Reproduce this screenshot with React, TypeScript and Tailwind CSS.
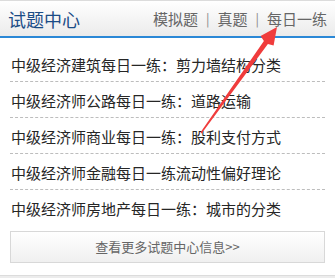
const items = [
  '中级经济建筑每日一练：剪力墙结构分类',
  '中级经济师公路每日一练：道路运输',
  '中级经济师商业每日一练：股利支付方式',
  '中级经济师金融每日一练流动性偏好理论',
  '中级经济师房地产每日一练：城市的分类',
];

const font = { fontFamily: '"Noto Sans CJK SC", "Noto Sans", sans-serif' };

export default function App() {
  return (
    <div className="relative w-[335px] h-[278px] overflow-hidden bg-white" style={font}>
      {/* header */}
      <div className="flex h-[36px] items-center justify-between border-t border-[#dcdcdc] bg-gradient-to-b from-white to-[#ebebeb] pl-[8px] pr-[8px]">
        <span className="text-[18px] leading-[22px] text-[#1b4c86]">试题中心</span>
        <div className="flex items-center text-[15px] leading-[20px] text-[#666]">
          <span>模拟题</span>
          <span className="mx-[8px] text-[13px] text-[#888]">|</span>
          <span>真题</span>
          <span className="mx-[8px] text-[13px] text-[#888]">|</span>
          <span>每日一练</span>
        </div>
      </div>
      <div className="h-[2px] bg-[#2b88d6]" />

      {/* list */}
      <ul className="mt-[8px] px-[10px]">
        {items.map((text, i) => (
          <li
            key={text}
            className={
              i < items.length - 1
                ? 'h-[36px] border-b border-dashed border-[#bdbdbd] pl-[1px] pt-[9px] text-[15px] leading-[20px] text-[#262626]'
                : 'h-[35px] pl-[1px] pt-[9px] text-[15px] leading-[20px] text-[#262626]'
            }
          >
            {text}
          </li>
        ))}
      </ul>

      <div className="mx-[10px] mt-[6px] flex h-[32px] items-center justify-center border border-[#d8d8d8] bg-gradient-to-b from-white to-[#f0f0f0] text-[13px] text-[#666]">
        查看更多试题中心信息&gt;&gt;
      </div>

      <div className="mt-[12px] h-[3px] border-t border-[#dcdcdc] bg-[#ececec]" />

      {/* red annotation arrow */}
      <svg className="pointer-events-none absolute left-0 top-0" width="335" height="278" viewBox="0 0 335 278">
        <polygon
          fill="#f03c3c"
          points="277,27 273.6,45.5 267.9,43.9 201.6,133.4 200.4,132.6 263.9,40.9 260.6,36.1"
        />
      </svg>
    </div>
  );
}
